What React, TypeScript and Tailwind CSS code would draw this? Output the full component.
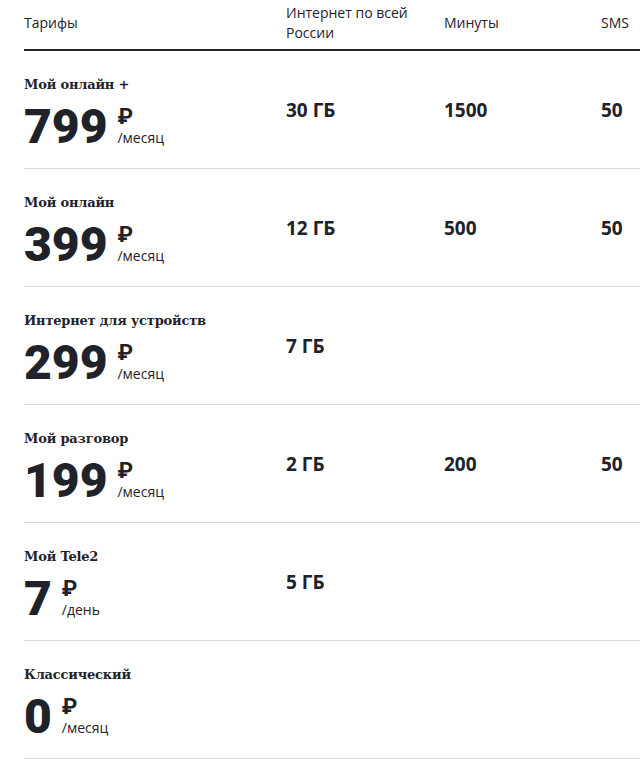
const tariffs = [
  { name: "Мой онлайн +", price: "799", unit: "/месяц", gb: "30 ГБ", min: "1500", sms: "50" },
  { name: "Мой онлайн", price: "399", unit: "/месяц", gb: "12 ГБ", min: "500", sms: "50" },
  { name: "Интернет для устройств", price: "299", unit: "/месяц", gb: "7 ГБ", min: "", sms: "" },
  { name: "Мой разговор", price: "199", unit: "/месяц", gb: "2 ГБ", min: "200", sms: "50" },
  { name: "Мой Tele2", price: "7", unit: "/день", gb: "5 ГБ", min: "", sms: "" },
  { name: "Классический", price: "0", unit: "/месяц", gb: "", min: "", sms: "" },
];

const sans = "font-['Open_Sans','Noto_Sans',sans-serif]";
const serif = "font-['DejaVu_Serif','Liberation_Serif',serif]";
const digits = "font-['Roboto','Liberation_Sans',sans-serif]";

const TariffRow = ({ t }) => (
  <div className="grid grid-cols-[262px_158px_157px_1fr] border-b border-[#d8d8d8] pt-6 pb-[17px]">
    <div>
      <div className={`${serif} text-[13px] font-bold leading-5 tracking-[-0.2px]`}>{t.name}</div>
      <div className="mt-2 flex h-12 items-start">
        <span className={`${digits} text-[48px] font-black leading-none`}>{t.price}</span>
        <div className="ml-[10px] flex flex-col">
          <span className={`${digits} mt-[5px] text-[22px] font-bold leading-[18px]`}>₽</span>
          <span className={`${sans} mt-[2px] text-[14px] leading-5`}>{t.unit}</span>
        </div>
      </div>
    </div>
    <div className={`${sans} mt-[23px] text-[19px] font-bold leading-6`}>{t.gb}</div>
    <div className={`${sans} mt-[23px] text-[19px] font-bold leading-6`}>{t.min}</div>
    <div className={`${sans} mt-[23px] text-[19px] font-bold leading-6`}>{t.sms}</div>
  </div>
);

export default function App() {
  return (
    <div className="h-[764px] w-[640px] overflow-hidden bg-white pl-6 text-[#1f2229]">
      <div className={`${sans} grid h-[51px] grid-cols-[262px_158px_157px_1fr] items-center border-b-2 border-[#1f2229] pb-[3px] text-[14px] leading-5`}>
        <div>Тарифы</div>
        <div>
          Интернет по всей
          <br />
          России
        </div>
        <div>Минуты</div>
        <div>SMS</div>
      </div>
      {tariffs.map((t) => (
        <TariffRow key={t.name} t={t} />
      ))}
    </div>
  );
}
